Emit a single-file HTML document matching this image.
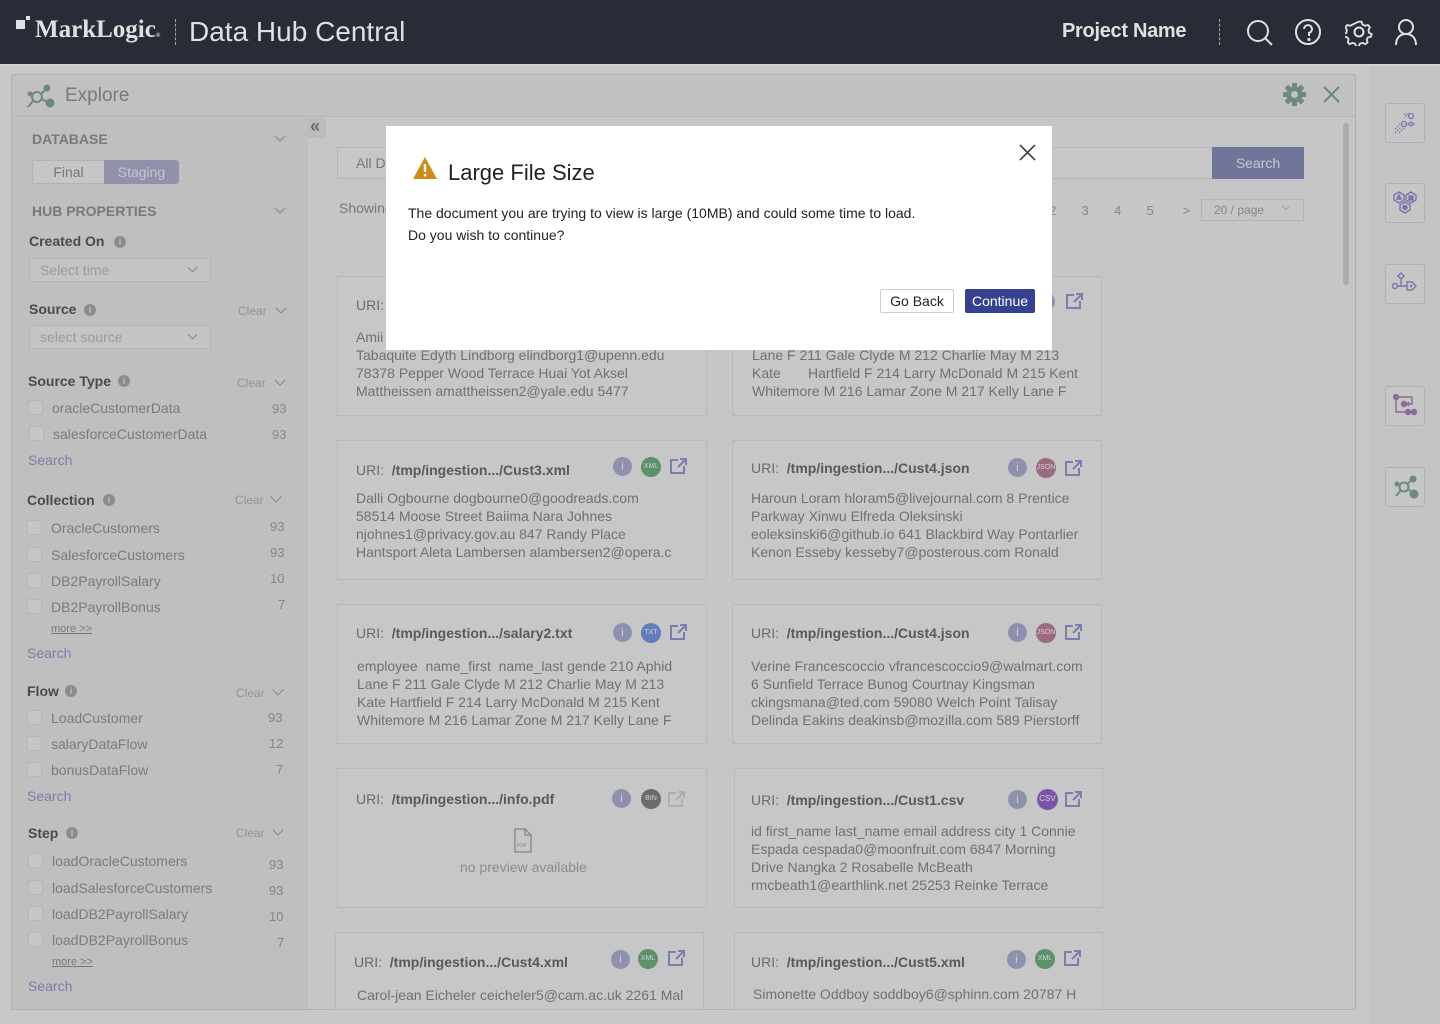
<!DOCTYPE html>
<html><head><meta charset="utf-8"><style>
*{margin:0;padding:0;box-sizing:border-box}
body{width:1440px;height:1024px;overflow:hidden;background:#e4e4e4;font-family:"Liberation Sans",Arial,sans-serif;position:relative}
.a{position:absolute;white-space:nowrap}
.hd{left:0;top:0;width:1440px;height:64px;background:#2d333f}
.sec{font-size:14px;font-weight:bold;color:#8a8a8a}
.lbl{font-size:14px;font-weight:bold;color:#555}
.it{font-size:14px;color:#8c8c8c}
.cnt{font-size:13px;color:#999}
.cb{width:15px;height:15px;border:1px solid #d0d0d0;background:#e2e2e2;border-radius:2px}
.srch{font-size:14px;color:#8a90c2}
.clr{font-size:12px;color:#a8a8a8}
.info{width:12px;height:12px;border-radius:50%;background:#a0a0a0;color:#ddd;font-size:9px;text-align:center;line-height:12px;font-weight:bold}
.chev{width:8px;height:8px;border-right:1.3px solid #999;border-bottom:1.3px solid #999;transform:rotate(45deg)}
.card{background:#e3e3e3;border:1px solid #d3d3d3}
.uri{font-size:14px;color:#7a7a7a}
.uri b{color:#666}
.txt{font-size:14px;color:#808080;line-height:18px}
.ci{width:19px;height:19px;border-radius:50%;background:#a2a4c6;color:#e8e8f0;font-size:12px;text-align:center;line-height:19px}
.badge{width:20px;height:20px;border-radius:50%;color:#eee;font-size:7px;text-align:center;line-height:20px}
.rt{width:40px;height:40px;border:1px solid #c8c8ce;border-radius:3px;background:#e2e2e2}
</style></head><body>
<div class="a hd"></div>
<div class="a" style="left:16px;top:20px;width:9px;height:9px;background:#fff"></div>
<div class="a" style="left:26px;top:16px;width:4px;height:4px;background:#fff"></div>
<div class="a" style="left:35px;top:16px;font-family:'Liberation Serif',serif;font-size:25px;font-weight:bold;color:#fff">MarkLogic<span style="font-size:6px">®</span></div>
<div class="a" style="left:175px;top:19px;height:26px;border-left:1px dashed #bbb"></div>
<div class="a" style="left:189px;top:16px;font-size:28px;color:#fff">Data Hub Central</div>
<div class="a" style="left:1062px;top:20px;font-size:20px;font-weight:bold;color:#fff;letter-spacing:-0.3px">Project Name</div>
<div class="a" style="left:1219px;top:19px;height:26px;border-left:1px dashed #bbb"></div>
<svg class="a" style="left:1245px;top:18px" width="30" height="30" fill="none" stroke="#fff" stroke-width="2"><circle cx="13" cy="13" r="10"/><path d="M20 20l7 7"/></svg>
<svg class="a" style="left:1294px;top:18px" width="28" height="28" fill="none" stroke="#fff" stroke-width="2"><circle cx="14" cy="14" r="12"/><path d="M10 11a4 4 0 1 1 5 4v3"/><circle cx="15" cy="21.5" r=".6" fill="#fff"/></svg>
<svg class="a" style="left:1345px;top:18px" width="28" height="28" fill="none" stroke="#fff" stroke-width="2"><path d="M14 3l3 0 1 3 3 1.5 3-1 2 2.5-1.5 3 .5 3 3 1.5-1 3-3 .5-1.5 2.5 1 3-2.5 2-3-1.5-3 1-1 3h-3l-1-3-3-1-3 1.5-2-2 1-3-1.5-2.5-3-.5-1-3 3-1.5.5-3-1.5-3 2-2.5 3 1 3-1.5z" transform="scale(.92) translate(1 1)"/><circle cx="14" cy="14" r="4.5"/></svg>
<svg class="a" style="left:1393px;top:18px" width="26" height="28" fill="none" stroke="#fff" stroke-width="2"><circle cx="13" cy="9" r="7"/><path d="M3 27c0-7 4-11 10-11s10 4 10 11"/></svg>
<div class="a" style="left:0;top:64px;width:1440px;height:2px;background:#f2f2f2"></div>
<div class="a" style="left:1370px;top:66px;width:70px;height:958px;background:#dedede"></div>

<div class="a" style="left:11px;top:74px;width:1345px;height:936px;border:1px solid #cacaca;background:#e2e2e2"></div>
<div class="a" style="left:12px;top:75px;width:1343px;height:42px;background:#dcdcdd;border-bottom:1px solid #cfcfcf"></div>
<svg class="a" style="left:26px;top:82px" width="32" height="28"><g fill="#7d9b8f" stroke="#7d9b8f" stroke-width="2"><circle cx="11" cy="15" r="5" fill="none"/><circle cx="21" cy="6" r="2.5"/><circle cx="24" cy="21" r="3.5"/><circle cx="4" cy="12" r="1.5"/><path d="M15 12l5-5M15 17l7 3M7 19l-5 6M6 13l-2-1" fill="none"/></g></svg>
<div class="a" style="left:65px;top:85px;font-size:19px;color:#8a8a8a">Explore</div>
<svg class="a" style="left:1283px;top:83px" width="23" height="23"><g fill="#7d9b8f"><circle cx="11.5" cy="11.5" r="8"/><rect x="9" y="0" width="5" height="23" rx="1"/><rect x="0" y="9" width="23" height="5" rx="1"/><rect x="9" y="0" width="5" height="23" rx="1" transform="rotate(45 11.5 11.5)"/><rect x="9" y="0" width="5" height="23" rx="1" transform="rotate(-45 11.5 11.5)"/></g><circle cx="11.5" cy="11.5" r="3.5" fill="#dcdcdd"/></svg>
<svg class="a" style="left:1323px;top:86px" width="17" height="17" stroke="#7d9b8f" stroke-width="2"><path d="M1 1l15 15M16 1L1 16"/></svg>

<div class="a" style="left:12px;top:118px;width:296px;height:891px;background:#dadada"></div>
<div class="a" style="left:308px;top:118px;width:18px;height:20px;background:#d6d6d6"></div>
<div class="a" style="left:310px;top:116px;font-size:18px;font-weight:bold;color:#777">«</div>
<div class="a sec" style="left:32px;top:131px">DATABASE</div><div class="a chev" style="left:276px;top:132px"></div>
<div class="a" style="left:32px;top:160px;width:73px;height:24px;border:1px solid #ccc;background:#e2e2e2;border-radius:3px 0 0 3px;font-size:14px;color:#888;text-align:center;line-height:22px">Final</div>
<div class="a" style="left:104px;top:160px;width:75px;height:24px;background:#a5a6c4;border-radius:0 3px 3px 0;font-size:14px;color:#dfe0ec;text-align:center;line-height:24px">Staging</div>
<div class="a sec" style="left:32px;top:203px">HUB PROPERTIES</div><div class="a chev" style="left:276px;top:204px"></div>
<div class="a lbl" style="left:29px;top:233px">Created On</div><div class="a info" style="left:114px;top:236px">i</div>
<div class="a" style="left:29px;top:258px;width:182px;height:24px;border:1px solid #cfcfcf;background:#e0e0e0"></div>
<div class="a it" style="left:40px;top:262px;color:#b0b0b0">Select time</div><div class="a chev" style="left:189px;top:264px;width:7px;height:7px"></div>
<div class="a lbl" style="left:29px;top:301px">Source</div><div class="a info" style="left:84px;top:304px">i</div>
<div class="a clr" style="left:238px;top:304px">Clear</div><div class="a chev" style="left:277px;top:304px"></div>
<div class="a" style="left:29px;top:325px;width:182px;height:24px;border:1px solid #cfcfcf;background:#e0e0e0"></div>
<div class="a it" style="left:40px;top:329px;color:#b0b0b0">select source</div><div class="a chev" style="left:189px;top:331px;width:7px;height:7px"></div>

<div class="a lbl" style="left:28px;top:373px">Source Type</div><div class="a info" style="left:118px;top:375px">i</div>
<div class="a clr" style="left:237px;top:376px">Clear</div><div class="a chev" style="left:276px;top:376px"></div>
<div class="a cb" style="left:28px;top:400px"></div><div class="a it" style="left:52px;top:400px">oracleCustomerData</div><div class="a cnt" style="left:272px;top:401px">93</div>
<div class="a cb" style="left:29px;top:426px"></div><div class="a it" style="left:53px;top:426px">salesforceCustomerData</div><div class="a cnt" style="left:272px;top:427px">93</div>
<div class="a srch" style="left:28px;top:452px">Search</div>

<div class="a lbl" style="left:27px;top:492px">Collection</div><div class="a info" style="left:103px;top:494px">i</div>
<div class="a clr" style="left:235px;top:493px">Clear</div><div class="a chev" style="left:272px;top:493px"></div>
<div class="a cb" style="left:27px;top:520px"></div><div class="a it" style="left:51px;top:520px">OracleCustomers</div><div class="a cnt" style="left:270px;top:519px">93</div>
<div class="a cb" style="left:27px;top:547px"></div><div class="a it" style="left:51px;top:547px">SalesforceCustomers</div><div class="a cnt" style="left:270px;top:545px">93</div>
<div class="a cb" style="left:27px;top:573px"></div><div class="a it" style="left:51px;top:573px">DB2PayrollSalary</div><div class="a cnt" style="left:270px;top:571px">10</div>
<div class="a cb" style="left:27px;top:599px"></div><div class="a it" style="left:51px;top:599px">DB2PayrollBonus</div><div class="a cnt" style="left:278px;top:597px">7</div>
<div class="a" style="left:51px;top:623px;font-size:11px;color:#888;text-decoration:underline">more &gt;&gt;</div>
<div class="a srch" style="left:27px;top:645px">Search</div>

<div class="a lbl" style="left:27px;top:683px">Flow</div><div class="a info" style="left:65px;top:685px">i</div>
<div class="a clr" style="left:236px;top:686px">Clear</div><div class="a chev" style="left:274px;top:686px"></div>
<div class="a cb" style="left:27px;top:710px"></div><div class="a it" style="left:51px;top:710px">LoadCustomer</div><div class="a cnt" style="left:268px;top:710px">93</div>
<div class="a cb" style="left:27px;top:736px"></div><div class="a it" style="left:51px;top:736px">salaryDataFlow</div><div class="a cnt" style="left:269px;top:736px">12</div>
<div class="a cb" style="left:27px;top:762px"></div><div class="a it" style="left:51px;top:762px">bonusDataFlow</div><div class="a cnt" style="left:276px;top:762px">7</div>
<div class="a srch" style="left:27px;top:788px">Search</div>

<div class="a lbl" style="left:28px;top:825px">Step</div><div class="a info" style="left:66px;top:827px">i</div>
<div class="a clr" style="left:236px;top:826px">Clear</div><div class="a chev" style="left:274px;top:826px"></div>
<div class="a cb" style="left:28px;top:853px"></div><div class="a it" style="left:52px;top:853px">loadOracleCustomers</div><div class="a cnt" style="left:269px;top:857px">93</div>
<div class="a cb" style="left:28px;top:880px"></div><div class="a it" style="left:52px;top:880px">loadSalesforceCustomers</div><div class="a cnt" style="left:269px;top:883px">93</div>
<div class="a cb" style="left:28px;top:906px"></div><div class="a it" style="left:52px;top:906px">loadDB2PayrollSalary</div><div class="a cnt" style="left:269px;top:909px">10</div>
<div class="a cb" style="left:28px;top:932px"></div><div class="a it" style="left:52px;top:932px">loadDB2PayrollBonus</div><div class="a cnt" style="left:277px;top:935px">7</div>
<div class="a" style="left:52px;top:956px;font-size:11px;color:#888;text-decoration:underline">more &gt;&gt;</div>
<div class="a srch" style="left:28px;top:978px">Search</div>

<div class="a" style="left:337px;top:147px;width:876px;height:32px;border:1px solid #d0d0d0;background:#e3e3e3"></div>
<div class="a it" style="left:356px;top:155px;color:#888">All D</div>
<div class="a" style="left:1212px;top:147px;width:92px;height:32px;background:#8186af;color:#e0e2ee;font-size:14px;text-align:center;line-height:32px">Search</div>
<div class="a it" style="left:339px;top:200px;color:#888">Showing</div>
<div class="a cnt" style="left:1049px;top:203px;color:#999">2 &nbsp; &nbsp; &nbsp; 3 &nbsp; &nbsp; &nbsp; 4 &nbsp; &nbsp; &nbsp; 5 &nbsp; &nbsp; &nbsp; &nbsp;&gt;</div>
<div class="a" style="left:1201px;top:199px;width:103px;height:22px;border:1px solid #d0d0d0;font-size:12px;color:#999;padding:3px 12px">20 / page</div>
<div class="a chev" style="left:1283px;top:203px;width:6px;height:6px;border-color:#bbb"></div>
<div class="a" style="left:1343px;top:123px;width:6px;height:162px;border-radius:3px;background:#c4c4c4"></div>

<div class="a card" style="left:337px;top:276px;width:370px;height:140px"></div>
<div class="a uri" style="left:356px;top:297px">URI:</div>
<div class="a txt" style="left:356px;top:328px">Amii<br>Tabaquite Edyth Lindborg elindborg1@upenn.edu<br>78378 Pepper Wood Terrace Huai Yot Aksel<br>Mattheissen amattheissen2@yale.edu 5477</div>
<div class="a card" style="left:732px;top:276px;width:370px;height:140px"></div>
<div class="a ci" style="left:1036px;top:292px">i</div>
<div class="a txt" style="left:752px;top:328px">210 Aphid<br>Lane F 211 Gale Clyde M 212 Charlie May M 213<br>Kate &nbsp; &nbsp; &nbsp; Hartfield F 214 Larry McDonald M 215 Kent<br>Whitemore M 216 Lamar Zone M 217 Kelly Lane F</div>

<div class="a card" style="left:337px;top:440px;width:370px;height:140px"></div>
<div class="a uri" style="left:356px;top:462px">URI:&nbsp; <b>/tmp/ingestion.../Cust3.xml</b></div>
<div class="a ci" style="left:613px;top:457px">i</div><div class="a badge" style="left:641px;top:457px;background:#6aa67a">XML</div>
<div class="a txt" style="left:356px;top:489px">Dalli Ogbourne dogbourne0@goodreads.com<br>58514 Moose Street Baiima Nara Johnes<br>njohnes1@privacy.gov.au 847 Randy Place<br>Hantsport Aleta Lambersen alambersen2@opera.c</div>
<div class="a card" style="left:732px;top:440px;width:370px;height:140px"></div>
<div class="a uri" style="left:751px;top:460px">URI:&nbsp; <b>/tmp/ingestion.../Cust4.json</b></div>
<div class="a ci" style="left:1008px;top:458px">i</div><div class="a badge" style="left:1036px;top:458px;background:#b07990">JSON</div>
<div class="a txt" style="left:751px;top:489px">Haroun Loram hloram5@livejournal.com 8 Prentice<br>Parkway Xinwu Elfreda Oleksinski<br>eoleksinski6@github.io 641 Blackbird Way Pontarlier<br>Kenon Esseby kesseby7@posterous.com Ronald</div>

<div class="a card" style="left:337px;top:604px;width:370px;height:140px"></div>
<div class="a uri" style="left:356px;top:625px">URI:&nbsp; <b>/tmp/ingestion.../salary2.txt</b></div>
<div class="a ci" style="left:613px;top:623px">i</div><div class="a badge" style="left:641px;top:623px;background:#6f8fd8">TXT</div>
<div class="a txt" style="left:357px;top:657px">employee&nbsp; name_first&nbsp; name_last gende 210 Aphid<br>Lane F 211 Gale Clyde M 212 Charlie May M 213<br>Kate Hartfield F 214 Larry McDonald M 215 Kent<br>Whitemore M 216 Lamar Zone M 217 Kelly Lane F</div>
<div class="a card" style="left:732px;top:604px;width:370px;height:140px"></div>
<div class="a uri" style="left:751px;top:625px">URI:&nbsp; <b>/tmp/ingestion.../Cust4.json</b></div>
<div class="a ci" style="left:1008px;top:623px">i</div><div class="a badge" style="left:1036px;top:623px;background:#b07990">JSON</div>
<div class="a txt" style="left:751px;top:657px">Verine Francescoccio vfrancescoccio9@walmart.com<br>6 Sunfield Terrace Bunog Courtnay Kingsman<br>ckingsmana@ted.com 59080 Welch Point Talisay<br>Delinda Eakins deakinsb@mozilla.com 589 Pierstorff</div>

<div class="a card" style="left:337px;top:768px;width:370px;height:140px"></div>
<div class="a uri" style="left:356px;top:791px">URI:&nbsp; <b>/tmp/ingestion.../info.pdf</b></div>
<div class="a ci" style="left:612px;top:789px">i</div><div class="a badge" style="left:641px;top:789px;background:#7a7a7a">BIN</div>
<svg class="a" style="left:667px;top:790px" width="20" height="18" fill="none" stroke="#c8c8c8" stroke-width="2"><path d="M9 3H2v13h13V9M11 2h6v6M17 2l-8 8"/></svg>
<svg class="a" style="left:513px;top:828px" width="20" height="25" fill="none" stroke="#999" stroke-width="1.3"><path d="M2 1h10l6 6v17H2zM12 1v6h6"/><text x="4" y="19" font-size="5" fill="#999" stroke="none" font-family="Liberation Sans">PDF</text></svg>
<div class="a it" style="left:460px;top:859px;color:#a0a0a0">no preview available</div>
<div class="a card" style="left:734px;top:768px;width:369px;height:140px"></div>
<div class="a uri" style="left:751px;top:792px">URI:&nbsp; <b>/tmp/ingestion.../Cust1.csv</b></div>
<div class="a ci" style="left:1008px;top:790px">i</div><div class="a badge" style="left:1037px;top:789px;width:21px;height:21px;background:#8f5fc2;font-size:8px">CSV</div>
<div class="a txt" style="left:751px;top:822px">id first_name last_name email address city 1 Connie<br>Espada cespada0@moonfruit.com 6847 Morning<br>Drive Nangka 2 Rosabelle McBeath<br>rmcbeath1@earthlink.net 25253 Reinke Terrace</div>

<div class="a card" style="left:335px;top:932px;width:369px;height:78px"></div>
<div class="a uri" style="left:354px;top:954px">URI:&nbsp; <b>/tmp/ingestion.../Cust4.xml</b></div>
<div class="a ci" style="left:611px;top:950px">i</div><div class="a badge" style="left:638px;top:949px;background:#6aa67a">XML</div>
<div class="a txt" style="left:357px;top:986px">Carol-jean Eicheler ceicheler5@cam.ac.uk 2261 Mal</div>
<div class="a card" style="left:734px;top:932px;width:369px;height:78px"></div>
<div class="a uri" style="left:751px;top:954px">URI:&nbsp; <b>/tmp/ingestion.../Cust5.xml</b></div>
<div class="a ci" style="left:1007px;top:950px">i</div><div class="a badge" style="left:1035px;top:949px;background:#6aa67a">XML</div>
<div class="a txt" style="left:753px;top:985px">Simonette Oddboy soddboy6@sphinn.com 20787 H</div>

<svg class="a" style="left:1065px;top:292px" width="20" height="18" fill="none" stroke="#8c90c4" stroke-width="2"><path d="M9 3H2v13h13V9M11 2h6v6M17 2l-8 8"/></svg>
<svg class="a" style="left:669px;top:457px" width="20" height="18" fill="none" stroke="#8c90c4" stroke-width="2"><path d="M9 3H2v13h13V9M11 2h6v6M17 2l-8 8"/></svg>
<svg class="a" style="left:1064px;top:459px" width="20" height="18" fill="none" stroke="#8c90c4" stroke-width="2"><path d="M9 3H2v13h13V9M11 2h6v6M17 2l-8 8"/></svg>
<svg class="a" style="left:669px;top:623px" width="20" height="18" fill="none" stroke="#8c90c4" stroke-width="2"><path d="M9 3H2v13h13V9M11 2h6v6M17 2l-8 8"/></svg>
<svg class="a" style="left:1064px;top:623px" width="20" height="18" fill="none" stroke="#8c90c4" stroke-width="2"><path d="M9 3H2v13h13V9M11 2h6v6M17 2l-8 8"/></svg>
<svg class="a" style="left:1064px;top:790px" width="20" height="18" fill="none" stroke="#8c90c4" stroke-width="2"><path d="M9 3H2v13h13V9M11 2h6v6M17 2l-8 8"/></svg>
<svg class="a" style="left:667px;top:949px" width="20" height="18" fill="none" stroke="#8c90c4" stroke-width="2"><path d="M9 3H2v13h13V9M11 2h6v6M17 2l-8 8"/></svg>
<svg class="a" style="left:1063px;top:949px" width="20" height="18" fill="none" stroke="#8c90c4" stroke-width="2"><path d="M9 3H2v13h13V9M11 2h6v6M17 2l-8 8"/></svg>

<div class="a rt" style="left:1385px;top:103px"></div>
<svg class="a" style="left:1393px;top:111px" width="24" height="24" fill="none" stroke="#8c84c0" stroke-width="1.3"><circle cx="18" cy="5" r="2.5"/><circle cx="11" cy="13" r="2.5"/><path d="M18 11l3 2-3 2-3-2z"/><path d="M11 3h4l-4 4M2 22l6-6M6 22l5-5M2 18l5-5" stroke-dasharray="1.5 1.5"/></svg>
<div class="a rt" style="left:1385px;top:183px"></div>
<svg class="a" style="left:1392px;top:189px" width="26" height="28" fill="none" stroke="#8c84c0" stroke-width="1.4"><path d="M7 3l5 3v5l-5 3-5-3V6zM19 3l5 3v5l-5 3-5-3V6zM13 13l5 3v5l-5 3-5-3v-5z"/><path d="M5 10l2-4 2 4z" fill="#8c84c0"/><rect x="17" y="7" width="4" height="4" fill="#8c84c0"/><circle cx="13" cy="18.5" r="2" fill="#8c84c0"/></svg>
<div class="a rt" style="left:1385px;top:264px"></div>
<svg class="a" style="left:1391px;top:271px" width="28" height="26" fill="none" stroke="#8c84c0" stroke-width="1.4"><path d="M10 2l3 3-3 3-3-3z"/><circle cx="4" cy="15" r="2.5"/><path d="M10 8v7h6M7 15h3M16 11l5 0 4 4-4 4h-5z"/><circle cx="20" cy="15" r=".6" fill="#8c84c0"/></svg>
<div class="a rt" style="left:1385px;top:386px"></div>
<svg class="a" style="left:1393px;top:394px" width="24" height="24" fill="#a07ab0" stroke="#a07ab0" stroke-width="1.4"><circle cx="3" cy="3" r="2.5"/><path d="M3 3h16v7h-6" fill="none"/><circle cx="11" cy="10" r="2.5"/><path d="M14 10l2-2M14 10l2 2" fill="none"/><path d="M3 6v12h9" fill="none"/><circle cx="15" cy="18" r="2.5"/><circle cx="21" cy="18" r="2.5"/></svg>
<div class="a rt" style="left:1385px;top:467px"></div>
<svg class="a" style="left:1393px;top:474px" width="26" height="26" fill="#7d9b8f" stroke="#7d9b8f" stroke-width="2"><circle cx="11" cy="13" r="4.5" fill="none"/><circle cx="20" cy="5" r="2.5"/><circle cx="21" cy="20" r="3.5"/><circle cx="4" cy="10" r="1.5"/><path d="M14 10l5-4M15 15l5 4M8 16l-5 6" fill="none"/></svg>

<div class="a" style="left:0;top:0;width:1440px;height:1024px;background:rgba(0,0,0,0.12)"></div>

<div class="a" style="left:386px;top:126px;width:666px;height:224px;background:#fff"></div>
<svg class="a" style="left:412px;top:156px" width="26" height="24"><path d="M13 1L25 23H1z" fill="#d08a16"/><rect x="11.8" y="8" width="2.4" height="8" fill="#fff"/><rect x="11.8" y="18" width="2.4" height="2.4" fill="#fff"/></svg>
<div class="a" style="left:448px;top:160px;font-size:22px;color:#222">Large File Size</div>
<svg class="a" style="left:1019px;top:144px" width="17" height="17" stroke="#444" stroke-width="1.6"><path d="M1 1l15 15M16 1L1 16"/></svg>
<div class="a" style="left:408px;top:205px;font-size:14px;color:#222">The document you are trying to view is large (10MB) and could some time to load.</div>
<div class="a" style="left:408px;top:227px;font-size:14px;color:#222">Do you wish to continue?</div>
<div class="a" style="left:880px;top:289px;width:74px;height:24px;border:1px solid #ccc;border-radius:2px;font-size:14px;color:#222;text-align:center;line-height:22px">Go Back</div>
<div class="a" style="left:965px;top:289px;width:70px;height:24px;background:#36418f;border-radius:2px;font-size:14px;color:#fff;text-align:center;line-height:24px">Continue</div>
</body></html>
